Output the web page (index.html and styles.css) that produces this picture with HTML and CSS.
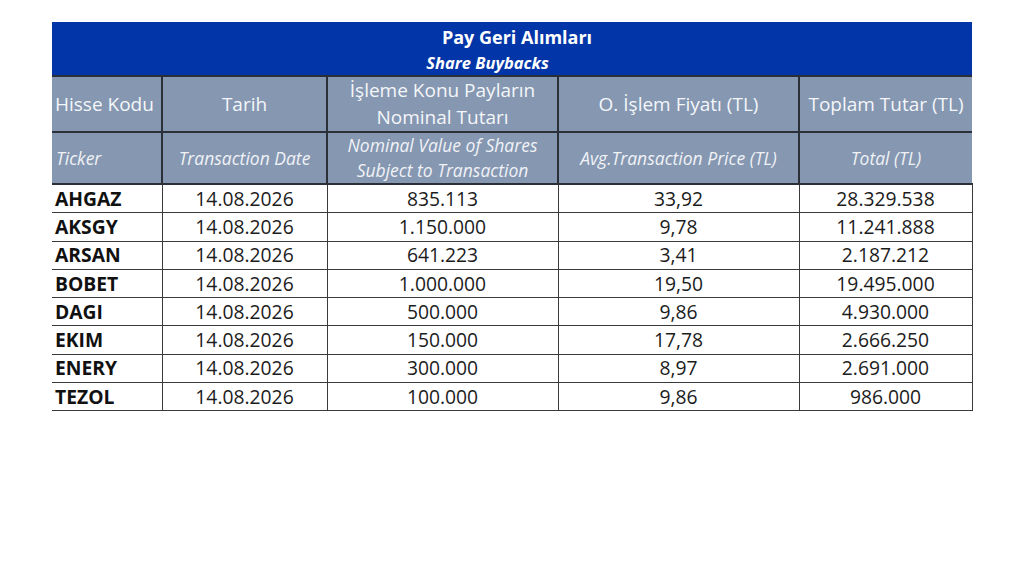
FILE: index.html
```html
<!DOCTYPE html>
<html lang="tr">
<head>
<meta charset="utf-8">
<title>Pay Geri Alımları</title>
<link rel="stylesheet" href="styles.css">
</head>
<body>
<table class="bb">
  <colgroup>
    <col class="c1"><col class="c2"><col class="c3"><col class="c4"><col class="c5">
  </colgroup>
  <thead>
    <tr class="title-row">
      <th colspan="5">
        <div class="title">Pay Geri Alımları</div>
        <div class="subtitle">Share Buybacks</div>
      </th>
    </tr>
    <tr class="head-tr">
      <th class="first">Hisse Kodu</th>
      <th>Tarih</th>
      <th class="two">İşleme Konu Payların<br>Nominal Tutarı</th>
      <th>O. İşlem Fiyatı (TL)</th>
      <th class="last">Toplam Tutar (TL)</th>
    </tr>
    <tr class="head-en">
      <th class="first">Ticker</th>
      <th>Transaction Date</th>
      <th class="two">Nominal Value of Shares<br>Subject to Transaction</th>
      <th>Avg.Transaction Price (TL)</th>
      <th class="last">Total (TL)</th>
    </tr>
  </thead>
  <tbody>
    <tr><td class="tk">AHGAZ</td><td>14.08.2026</td><td>835.113</td><td>33,92</td><td class="last">28.329.538</td></tr>
    <tr><td class="tk">AKSGY</td><td>14.08.2026</td><td>1.150.000</td><td>9,78</td><td class="last">11.241.888</td></tr>
    <tr><td class="tk">ARSAN</td><td>14.08.2026</td><td>641.223</td><td>3,41</td><td class="last">2.187.212</td></tr>
    <tr><td class="tk">BOBET</td><td>14.08.2026</td><td>1.000.000</td><td>19,50</td><td class="last">19.495.000</td></tr>
    <tr><td class="tk">DAGI</td><td>14.08.2026</td><td>500.000</td><td>9,86</td><td class="last">4.930.000</td></tr>
    <tr><td class="tk">EKIM</td><td>14.08.2026</td><td>150.000</td><td>17,78</td><td class="last">2.666.250</td></tr>
    <tr><td class="tk">ENERY</td><td>14.08.2026</td><td>300.000</td><td>8,97</td><td class="last">2.691.000</td></tr>
    <tr><td class="tk">TEZOL</td><td>14.08.2026</td><td>100.000</td><td>9,86</td><td class="last">986.000</td></tr>
  </tbody>
</table>
</body>
</html>
```
FILE: styles.css
```css
html, body {
  margin: 0;
  background: #ffffff;
}
body {
  padding: 22px 0 0 52px;
  font-family: "Open Sans", "Liberation Sans", sans-serif;
  color: #111;
}
.bb {
  border-collapse: collapse;
  table-layout: fixed;
  width: 920px;
}
.c1 { width: 110px; }
.c2 { width: 165px; }
.c3 { width: 231px; }
.c4 { width: 241px; }
.c5 { width: 173px; }

.bb th, .bb td {
  padding: 0;
}
.title-row th {
  background: #0235a7;
  color: #ffffff;
  height: 53px;
  text-align: center;
  font-weight: 700;
  padding-top: 0;
}
.title {
  font-size: 18px;
  line-height: 27px;
  padding-left: 10px;
}
.subtitle {
  font-size: 16.5px;
  font-style: italic;
  line-height: 23px;
  padding-right: 49px;
}
.head-tr th, .head-en th {
  background: #8597b1;
  color: #f4f6f9;
  font-weight: 400;
  text-align: center;
  border: 2px solid #2b2f38;
}
.head-tr th {
  height: 54px;
  font-size: 19px;
  line-height: 27px;
}
.head-en th {
  height: 48px;
  font-size: 17.5px;
  font-style: italic;
  line-height: 25px;
  color: #f0f2f6;
}
.head-tr th.first, .head-en th.first {
  border-left: none;
  text-align: left;
  padding-left: 3px;
}
.head-en th.first { padding-left: 4px; }
.head-tr th.last, .head-en th.last { border-right: none; }

.bb td {
  height: 27.3px;
  font-size: 19.3px;
  line-height: 26px;
  text-align: center;
  border: 1.5px solid #3a3a3a;
  color: #1c1c1c;
}
.bb td.tk {
  text-align: left;
  font-weight: 700;
  padding-left: 3px;
  border-left: none;
  color: #111;
}
.bb td.last { border-right: 1.5px solid #3a3a3a; }
```
